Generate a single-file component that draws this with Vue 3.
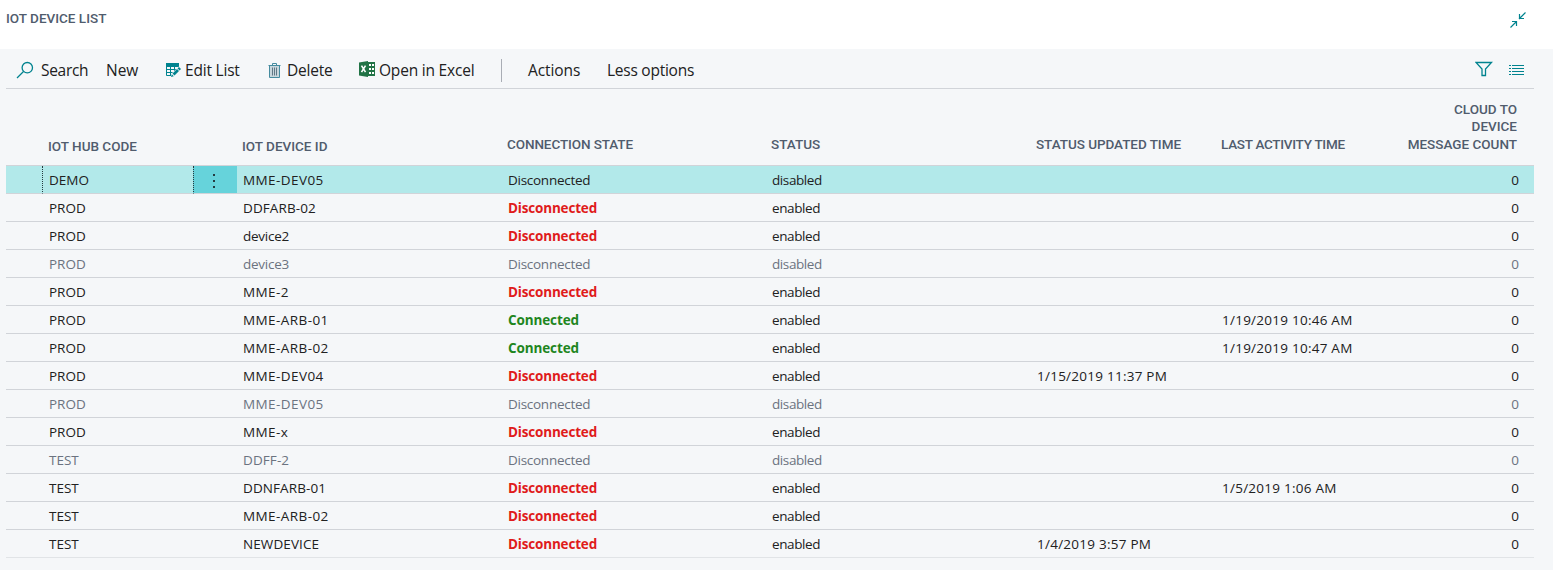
<script setup>
const headers = [
  { key: 'gutter', label: '' },
  { key: 'hub', label: 'IOT HUB CODE' },
  { key: 'menu', label: '' },
  { key: 'device', label: 'IOT DEVICE ID' },
  { key: 'state', label: 'CONNECTION STATE' },
  { key: 'status', label: 'STATUS' },
  { key: 'updated', label: 'STATUS UPDATED TIME' },
  { key: 'activity', label: 'LAST ACTIVITY TIME' },
  { key: 'count', label: 'CLOUD TO\nDEVICE\nMESSAGE COUNT' },
]

const row = (hub, device, state, status, updated = '', activity = '') => ({ hub, device, state, status, updated, activity, count: 0 })
const rows = [
  row('DEMO', 'MME-DEV05', 'Disconnected', 'disabled'),
  row('PROD', 'DDFARB-02', 'Disconnected', 'enabled'),
  row('PROD', 'device2', 'Disconnected', 'enabled'),
  row('PROD', 'device3', 'Disconnected', 'disabled'),
  row('PROD', 'MME-2', 'Disconnected', 'enabled'),
  row('PROD', 'MME-ARB-01', 'Connected', 'enabled', '', '1/19/2019 10:46 AM'),
  row('PROD', 'MME-ARB-02', 'Connected', 'enabled', '', '1/19/2019 10:47 AM'),
  row('PROD', 'MME-DEV04', 'Disconnected', 'enabled', '1/15/2019 11:37 PM'),
  row('PROD', 'MME-DEV05', 'Disconnected', 'disabled'),
  row('PROD', 'MME-x', 'Disconnected', 'enabled'),
  row('TEST', 'DDFF-2', 'Disconnected', 'disabled'),
  row('TEST', 'DDNFARB-01', 'Disconnected', 'enabled', '', '1/5/2019 1:06 AM'),
  row('TEST', 'MME-ARB-02', 'Disconnected', 'enabled'),
  row('TEST', 'NEWDEVICE', 'Disconnected', 'enabled', '1/4/2019 3:57 PM'),
]
const selected = 0

function deviceTracking(name) {
  if (name.startsWith('MME')) return 'wide'
  return name.startsWith('device') ? 'tight' : 'normal'
}
</script>

<template>
  <main class="page">
    <header class="title-bar">
      <h1>IOT DEVICE LIST</h1>
      <svg class="collapse" width="18" height="18" viewBox="0 0 18 18">
        <path d="M16.500 1.500 10 8M10.500 3v4.500H15M1.500 16.500 7.500 10.500M3 10.500h4.500V15" />
      </svg>
    </header>

    <section class="content">
      <nav class="toolbar">
        <button class="search">
          <svg width="18" height="18" viewBox="0 0 18 18" class="line">
            <circle cx="11.300" cy="6.700" r="5.200" /><path d="M7.500 10.500 1 17" />
          </svg>
          <span>Search</span>
        </button>
        <button class="new"><span>New</span></button>
        <button class="edit">
          <svg width="16" height="16" viewBox="0 0 16 16">
            <path fill="#00838f" d="M1 1h13v4H1z" />
            <path class="grid-lines" d="M1.500 4v9.500H8M13.500 4v2M1 7.500h11M1 10.500h9M5.500 4v10M9.500 4v8" />
            <path fill="#f5f7f9" d="M14 4.500 6 12v4h4l6-8z" />
            <path fill="#00838f" d="m14 5 2 2-1.400 1.400-2-2zM12 7l2 2-4.500 4.500-2-2zM6.800 12.200l2 2-2.800.8z" />
          </svg>
          <span>Edit List</span>
        </button>
        <button class="delete">
          <svg width="14" height="17" viewBox="0 0 14 17">
            <path fill="#c8d6dc" d="M2 4h10v11.500H2z" />
            <path fill="none" stroke="#458b9f" d="M.5 3.500h12M4.500 3V1.500h4V3M1.500 4v11.500h10V4" />
            <path fill="none" stroke="#607785" d="M4.500 5.500v8M6.500 5.500v8M8.500 5.500v8" />
          </svg>
          <span>Delete</span>
        </button>
        <button class="excel">
          <svg width="17" height="17" viewBox="0 0 17 17">
            <path fill="#217346" d="M0 1.500 9 0v16L0 14.500zM9 1h7v14H9z" />
            <path fill="none" stroke="#fff" stroke-width="1.600" d="m2.500 4.700 4 6.500m0-6.500-4 6.500" />
            <path stroke="#fff" stroke-width="2" d="M10 4h5M10 8h5M10 12h5" />
            <path stroke="#217346" d="M12.500 2v12" />
          </svg>
          <span>Open in Excel</span>
        </button>
        <i class="divider"></i>
        <button class="actions"><span>Actions</span></button>
        <button class="less"><span>Less options</span></button>
        <div class="view-tools">
          <svg width="18" height="16" viewBox="0 0 18 16" class="line">
            <path d="M1 1.500h15.500L10.500 8v6.500H7V8z" />
          </svg>
          <svg width="16" height="12" viewBox="0 0 16 12" class="list-icon">
            <path d="M0 1.500h2M3 1.500h12M0 4.500h2M3 4.500h12M0 7.500h2M3 7.500h12M0 10.500h2M3 10.500h12" />
          </svg>
        </div>
      </nav>

      <div class="table">
        <div class="row head">
          <div v-for="h in headers" :key="h.key" :class="['cell', h.key]"><span>{{ h.label }}</span></div>
        </div>
        <div
          v-for="(r, i) in rows"
          :key="i"
          :class="['row', 'data', { selected: i === selected, muted: i !== selected && r.status === 'disabled' }]"
        >
          <div class="cell gutter"></div>
          <div class="cell hub">{{ r.hub }}</div>
          <div class="cell menu">
            <svg v-if="i === selected" width="4" height="16" viewBox="0 0 4 16"><path fill="#253b40" d="M1 2h2v2H1zM1 8h2v2H1zM1 14h2v2H1z" /></svg>
          </div>
          <div :class="['cell', 'device', deviceTracking(r.device)]">{{ r.device }}</div>
          <div :class="['cell', 'state', r.status === 'enabled' ? r.state.toLowerCase() : '']">{{ r.state }}</div>
          <div class="cell status">{{ r.status }}</div>
          <div class="cell updated">{{ r.updated }}</div>
          <div class="cell activity">{{ r.activity }}</div>
          <div class="cell count">{{ r.count }}</div>
        </div>
      </div>
    </section>
  </main>
</template>

<style>
body { background: #fff; }
</style>

<style scoped>
* { box-sizing: border-box; }
.page {
  width: 1553px;
  height: 570px;
  overflow: hidden;
  display: flex;
  flex-direction: column;
  font-family: "Open Sans", "Noto Sans", sans-serif;
  color: #212121;
}
.title-bar {
  height: 49px;
  flex: none;
  display: flex;
  justify-content: space-between;
  padding: 10px 26px 0 6px;
}
h1 {
  margin: 0;
  font: 500 13.5px/17px Roboto, sans-serif;
  color: #505c6d;
}
.collapse { margin-top: 1px; fill: none; stroke: #00838f; stroke-width: 1.2; }
.content { flex: 1; background: #f5f7f9; padding: 0 19px 0 6px; }
.toolbar {
  height: 40px;
  display: flex;
  align-items: center;
  padding: 3px 9px 0 10px;
  border-bottom: 1px solid #d1d4d9;
}
button {
  border: 0;
  padding: 0;
  background: none;
  display: flex;
  align-items: center;
  flex: none;
  font: 15.5px/22px "Open Sans", sans-serif;
  color: #212121;
  white-space: nowrap;
}
button svg { flex: none; }
.line { fill: none; stroke: #00838f; stroke-width: 1.3; }
.grid-lines { fill: none; stroke: #00838f; }
.search { width: 90px; gap: 7px; letter-spacing: -0.3px; }
.new { width: 59px; }
.edit { width: 103px; gap: 4px; letter-spacing: -0.2px; }
.delete { width: 91px; gap: 5px; letter-spacing: -0.2px; }
.excel { width: 142px; gap: 3px; letter-spacing: -0.2px; }
.excel svg { margin-top: -2px; }
.divider { width: 1px; height: 23px; background: #a9adb5; }
.actions { margin-left: 26px; width: 79px; letter-spacing: -0.1px; }
.less { width: 90px; letter-spacing: -0.25px; }
.view-tools { margin-left: auto; display: flex; align-items: center; gap: 16px; }
.view-tools .line { margin-top: -2px; }
.list-icon { stroke: #00838f; fill: none; }
.row {
  display: grid;
  grid-template-columns: 36px 151px 44px 264px 264px 265px 185px 181px 1fr;
}
.head { height: 77px; border-bottom: 1px solid #d1d4d9; }
.head .cell {
  align-self: end;
  padding: 0 0 12px 6px;
  font: 500 13.5px/17.5px Roboto, sans-serif;
  color: #505c6d;
  white-space: pre;
}
.head .device { padding-left: 5px; padding-bottom: 10px; }
.head .hub { padding-bottom: 10px; }
.head .state { letter-spacing: -0.1px; }
.head .updated { letter-spacing: -0.05px; }
.head .activity { letter-spacing: -0.28px; }
.head .count { text-align: right; padding-right: 17px; }
.data { height: 28px; font-size: 13.5px; line-height: 28px; }
.data .cell { padding-left: 7px; border-bottom: 1px solid #d1d4d9; height: 28px; white-space: nowrap; }
.data .device { padding-left: 6px; }
.data .device.wide { letter-spacing: 0.42px; }
.data .device.tight { letter-spacing: -0.25px; }
.data .device.normal { letter-spacing: 0.1px; }
.data .state { letter-spacing: -0.27px; }
.data .status { letter-spacing: -0.4px; }
.data .updated, .data .activity { letter-spacing: 0.25px; }
.data .count { text-align: right; padding-right: 15px; }
.data .menu { display: flex; align-items: center; justify-content: center; padding: 0 3px 0 0; }
.muted { color: #6b7380; }
.data .state.disconnected { color: #e01b1b; font-weight: 700; letter-spacing: -0.18px; }
.data .state.connected { color: #1e861e; font-weight: 700; letter-spacing: -0.12px; }
.selected .hub { border-left: 1px dotted #253b40; padding-left: 6px; }
.selected { background: #b2e9ea; }
.selected .menu { background: #66d3db; border-left: 1px dotted #253b40; }
.data:last-child .cell { border-bottom-color: #e1e4e7; }
</style>
